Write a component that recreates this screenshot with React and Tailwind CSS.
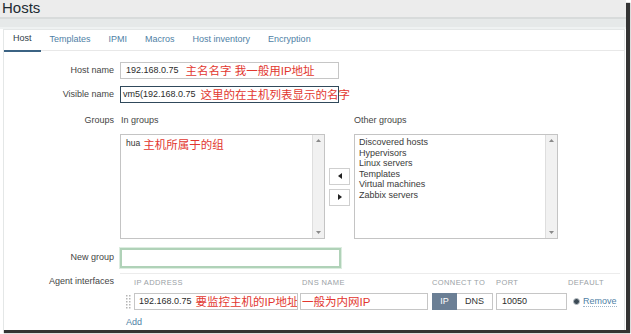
const tabs = ['Host', 'Templates', 'IPMI', 'Macros', 'Host inventory', 'Encryption'];
const otherGroups = ['Discovered hosts', 'Hypervisors', 'Linux servers', 'Templates', 'Virtual machines', 'Zabbix servers'];

const font = { fontFamily: '"Liberation Sans", Arial, "Noto Sans CJK SC", sans-serif' };
const label = 'w-[110px] shrink-0 text-right text-[9px] text-[#454545]';
const red = 'text-[11.5px] leading-[14px] text-[#e2372f] whitespace-nowrap';

function Scrollbar() {
  return (
    <div className="w-[12px] shrink-0 bg-[#f1f1f1] border-l border-[#dedede] flex flex-col justify-between items-center py-[4px]">
      <svg width="5" height="3" viewBox="0 0 5 3"><path d="M0 3 L2.5 0 L5 3 Z" fill="#8a8a8a" /></svg>
      <svg width="5" height="3" viewBox="0 0 5 3"><path d="M0 0 L2.5 3 L5 0 Z" fill="#8a8a8a" /></svg>
    </div>
  );
}

function Grip() {
  return (
    <svg width="5" height="14" viewBox="0 0 5 14">
      {[0, 1, 2, 3, 4].map((r) => (
        <g key={r}>
          <rect x="0" y={r * 3} width="1.5" height="1.5" fill="#b5b5b5" />
          <rect x="3" y={r * 3} width="1.5" height="1.5" fill="#b5b5b5" />
        </g>
      ))}
    </svg>
  );
}

export default function App() {
  return (
    <div className="w-[631px] h-[334px] bg-white overflow-hidden" style={font}>
      <div className="w-[626px] h-[330px] bg-white shadow-[4px_3px_1px_#333] flex flex-col">
        {/* page title band */}
        <div className="h-[17px] bg-[#ececec] pl-[2px]">
          <h1 className="text-[15px] leading-[15px] text-[#1e2b33]">Hosts</h1>
        </div>
        <div className="h-[2px] bg-[#d8dbdb]" />
        <div className="h-[8px] bg-[#e6e9e9]" />
        <div className="h-[2px] bg-[#eff2f2]" />

        <div className="flex-1 ml-[3px] mr-[1px] border-l border-r border-t border-[#e4e7e7] flex flex-col">
          {/* tabs */}
          <div className="flex h-[21px] border-b border-[#e8e8e8]">
            {tabs.map((t, i) => (
              <div
                key={t}
                className={
                  'h-[22px] px-[9px] pb-[2px] flex items-center text-[9px] whitespace-nowrap ' +
                  (i === 0 ? 'text-[#2f3d48] border-b-[2px] border-[#3b6383]' : 'text-[#4f7fa6]')
                }
              >
                {t}
              </div>
            ))}
          </div>

          {/* form */}
          <div className="flex flex-col">
            <div className="mt-[11px] flex items-center gap-[6px]">
              <div className={label}>Host name</div>
              <div className="w-[219px] h-[17px] border border-[#c6c6c6] pl-[5px] flex items-center gap-[7px] whitespace-nowrap">
                <span className="text-[9px] text-[#2b2b2b]">192.168.0.75</span>
                <span className={red}>主名名字 我一般用IP地址</span>
              </div>
            </div>

            <div className="mt-[7px] flex items-center gap-[6px]">
              <div className={label}>Visible name</div>
              <div className="w-[219px] h-[17px] border border-[#30495b] pl-[2px] flex items-center whitespace-nowrap">
                <span className="text-[9px] text-[#2b2b2b]">vm5(192.168.0.75</span>
                <span className="w-px h-[11px] bg-[#222] ml-px" />
                <span className={red + ' ml-[4px]'}>这里的在主机列表显示的名字</span>
              </div>
            </div>

            <div className="mt-[11px] flex gap-[6px]">
              <div className={label + ' leading-[13px]'}>Groups</div>
              <div className="flex gap-[4px]">
                <div className="w-[205px] flex flex-col">
                  <div className="h-[13px] leading-[13px] text-[9px] text-[#454545] mb-[7px] pl-px">In groups</div>
                  <div className="h-[105px] border border-[#c4c4c4] flex">
                    <div className="flex-1 flex items-start gap-[3px] pl-[5px] pt-[3px]">
                      <span className="text-[8.5px] leading-[10px] text-[#333]">hua</span>
                      <span className={red}>主机所属于的组</span>
                    </div>
                    <Scrollbar />
                  </div>
                </div>

                <div className="pt-[20px] flex flex-col justify-center gap-[4px]">
                  <div className="w-[21px] h-[17px] border border-[#cfcfcf] bg-white flex items-center justify-center">
                    <svg width="4" height="6" viewBox="0 0 4 6"><path d="M4 0 L0 3 L4 6 Z" fill="#222" /></svg>
                  </div>
                  <div className="w-[21px] h-[17px] border border-[#cfcfcf] bg-white flex items-center justify-center">
                    <svg width="4" height="6" viewBox="0 0 4 6"><path d="M0 0 L4 3 L0 6 Z" fill="#222" /></svg>
                  </div>
                </div>

                <div className="w-[204px] flex flex-col">
                  <div className="h-[13px] leading-[13px] text-[9px] text-[#454545] mb-[7px]">Other groups</div>
                  <div className="h-[105px] border border-[#c4c4c4] flex">
                    <div className="flex-1 pl-[4px] pt-[2px] flex flex-col">
                      {otherGroups.map((g) => (
                        <div key={g} className="text-[9px] leading-[10.5px] text-[#3a3a3a] whitespace-nowrap">{g}</div>
                      ))}
                    </div>
                    <Scrollbar />
                  </div>
                </div>
              </div>
            </div>

            <div className="mt-[9px] flex items-center gap-[6px]">
              <div className={label}>New group</div>
              <div className="w-[221px] h-[20px] border-[2px] border-[#b0d2b8] shadow-[0_0_0_1px_#dcede0] bg-white" />
            </div>

            <div className="mt-[5px] flex gap-[6px]">
              <div className={label + ' pt-[4px] leading-[9px]'}>Agent interfaces</div>
              <div className="w-[500px] border-t border-[#ececec] pt-[4px]">
                <div className="grid grid-cols-[14px_166px_132px_64px_72px_1fr] text-[7.5px] leading-[9px] tracking-[0.4px] text-[#9aa1a6]">
                  <div />
                  <div>IP ADDRESS</div>
                  <div className="pl-[2px]">DNS NAME</div>
                  <div>CONNECT TO</div>
                  <div>PORT</div>
                  <div>DEFAULT</div>
                </div>

                <div className="mt-[6px] grid grid-cols-[14px_166px_132px_64px_72px_1fr] items-center h-[17px]">
                  <div className="pl-[6px] flex items-center"><Grip /></div>
                  <div className="w-[164px] h-[17px] border border-[#c6c6c6] pl-[4px] flex items-center gap-[4px] whitespace-nowrap overflow-hidden">
                    <span className="text-[9px] text-[#2b2b2b]">192.168.0.75</span>
                    <span className={red}>要监控主机的IP地址</span>
                  </div>
                  <div className="w-[128px] h-[17px] border border-[#c6c6c6] pl-[1px] flex items-center">
                    <span className={red}>一般为内网IP</span>
                  </div>
                  <div className="flex h-[17px]">
                    <div className="w-[25px] bg-[#6b7f95] text-white text-[9px] flex items-center justify-center">IP</div>
                    <div className="w-[36px] border border-l-0 border-[#c6c6c6] bg-white text-[#333] text-[9px] flex items-center justify-center">DNS</div>
                  </div>
                  <div className="w-[71px] h-[17px] border border-[#c6c6c6] pl-[5px] flex items-center text-[9px] text-[#2b2b2b]">10050</div>
                  <div className="flex items-center pl-[5px] gap-[3px]">
                    <span className="w-[7px] h-[7px] rounded-full bg-[#3c4a55] border border-[#b9c0c5]" />
                    <span className="text-[9px] text-[#4f7fa6] border-b border-dotted border-[#9db5c9] leading-[10px]">Remove</span>
                  </div>
                </div>

                <div className="mt-[7px] pl-[6px] text-[9px] leading-[10px] text-[#4f7fa6]">Add</div>
              </div>
            </div>
          </div>
        </div>
      </div>
    </div>
  );
}
